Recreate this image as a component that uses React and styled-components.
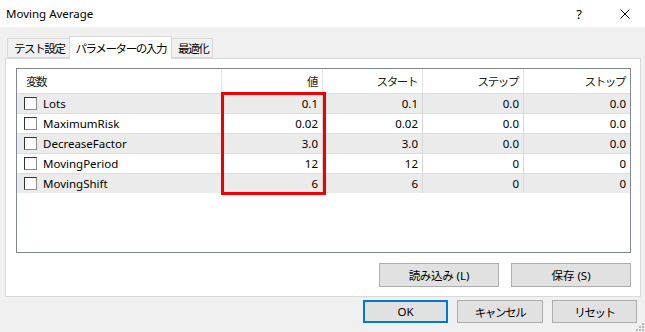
import React from "react";
import styled, { createGlobalStyle } from "styled-components";

const GlobalStyle = createGlobalStyle`
  html, body {
    margin: 0;
    padding: 0;
    background: #f0f0f0;
  }
  body {
    font-family: "Noto Sans", "Noto Sans CJK JP", sans-serif;
    font-size: 11.5px;
    color: #000;
  }
`;

const params = [
  { name: "Lots", value: "0.1", start: "0.1", step: "0.0", stop: "0.0" },
  { name: "MaximumRisk", value: "0.02", start: "0.02", step: "0.0", stop: "0.0" },
  { name: "DecreaseFactor", value: "3.0", start: "3.0", step: "0.0", stop: "0.0" },
  { name: "MovingPeriod", value: "12", start: "12", step: "0", stop: "0" },
  { name: "MovingShift", value: "6", start: "6", step: "0", stop: "0" },
];

const tabs = ["テスト設定", "パラメーターの入力", "最適化"];

function App() {
  return (
    <Window>
      <GlobalStyle />
      <TitleBar>
        <Title>Moving Average</Title>
        <TitleButtons>
          <HelpMark>?</HelpMark>
          <CloseIcon viewBox="0 0 10 10">
            <path d="M0.5 0.5 L9.5 9.5 M9.5 0.5 L0.5 9.5" stroke="#000" strokeWidth="1" />
          </CloseIcon>
        </TitleButtons>
      </TitleBar>

      <TabRow>
        {tabs.map((t, i) => (
          <Tab key={t} active={i === 1}>
            <Jp>{t}</Jp>
          </Tab>
        ))}
      </TabRow>

      <Panel>
        <TableBox>
          <Grid>
            <HeadCell align="left">
              <Jp>変数</Jp>
            </HeadCell>
            <HeadCell>
              <Jp>値</Jp>
            </HeadCell>
            <HeadCell>
              <Jp>スタート</Jp>
            </HeadCell>
            <HeadCell>
              <Jp>ステップ</Jp>
            </HeadCell>
            <HeadCell last>
              <Jp>ストップ</Jp>
            </HeadCell>
            {params.map((p, i) => (
              <Row key={p.name} odd={i % 2 === 0}>
                <NameCell>
                  <Check />
                  <span>{p.name}</span>
                </NameCell>
                <Cell>{p.value}</Cell>
                <Cell>{p.start}</Cell>
                <Cell>{p.step}</Cell>
                <Cell last>{p.stop}</Cell>
              </Row>
            ))}
          </Grid>
          <Highlight />
        </TableBox>
        <PanelButtons>
          <Button w={120}>
            <Jp spacing={-0.3}>読み込み</Jp>&nbsp;(L)
          </Button>
          <Button w={120}>
            <Jp spacing={0}>保存</Jp>&nbsp;(S)
          </Button>
        </PanelButtons>
      </Panel>

      <Footer>
        <Button w={85} h={23} primary>
          OK
        </Button>
        <Button w={86} h={23}>
          <Jp>キャンセル</Jp>
        </Button>
        <Button w={85} h={23}>
          <Jp>リセット</Jp>
        </Button>
      </Footer>
      <Grip viewBox="0 0 10 10">
        {[
          [7, 1],
          [4, 4],
          [7, 4],
          [1, 7],
          [4, 7],
          [7, 7],
        ].map(([x, y]) => (
          <rect key={`${x}-${y}`} x={x} y={y} width="2" height="2" fill="#b8b8b8" />
        ))}
      </Grip>
    </Window>
  );
}

export default App;

const Window = styled.div`
  position: relative;
  width: 645px;
  height: 332px;
  background: #f0f0f0;
  overflow: hidden;
`;

const Jp = styled.span`
  font-size: 11.5px;
  letter-spacing: ${({ spacing }) => (spacing === undefined ? -1.4 : spacing)}px;
  display: inline-block;
`;

const TitleBar = styled.div`
  height: 27px;
  background: #fff;
  display: flex;
  align-items: center;
  justify-content: space-between;
`;

const Title = styled.div`
  padding-left: 6px;
  font-size: 11.5px;
  color: #000;
  margin-top: -1px;
`;

const TitleButtons = styled.div`
  display: flex;
  align-items: center;
  padding-right: 15px;
  gap: 38px;
`;

const HelpMark = styled.span`
  font-size: 13px;
  color: #000;
`;

const CloseIcon = styled.svg`
  width: 10px;
  height: 10px;
`;

const TabRow = styled.div`
  display: flex;
  align-items: flex-end;
  height: 22px;
  margin-top: 9px;
  padding-left: 8px;
  position: relative;
  z-index: 1;
`;

const Tab = styled.div`
  height: ${({ active }) => (active ? "23px" : "20px")};
  padding: ${({ active }) => (active ? "0 5px 0 6px" : "0 4px 0 6px")};
  box-sizing: border-box;
  display: flex;
  align-items: center;
  background: ${({ active }) => (active ? "#fff" : "#f0f0f0")};
  border: 1px solid #d9d9d9;
  border-bottom: ${({ active }) => (active ? "none" : "1px solid #d9d9d9")};
  margin-left: -1px;
  margin-bottom: ${({ active }) => (active ? "-1px" : "0")};
  color: #000;
`;

const Panel = styled.div`
  margin: 0 4px 0 5px;
  height: 239px;
  box-sizing: border-box;
  background: #fff;
  border: 1px solid #d9d9d9;
  padding: 9px 9px 0 10px;
  display: flex;
  flex-direction: column;
`;

const TableBox = styled.div`
  position: relative;
  height: 185px;
  box-sizing: border-box;
  border: 1px solid #828790;
  background: #fff;
`;

const Grid = styled.div`
  display: grid;
  grid-template-columns: 205px 101px 100px 101px 1fr;
  grid-auto-rows: 20px;
  grid-template-rows: 24px;
`;

const HeadCell = styled.div`
  display: flex;
  align-items: center;
  justify-content: ${({ align }) => (align === "left" ? "flex-start" : "flex-end")};
  padding: ${({ align }) => (align === "left" ? "0 0 0 9px" : "0 5px 0 0")};
  border-right: ${({ last }) => (last ? "none" : "1px solid #e5e5e5")};
  color: #222;
`;

const Row = styled.div`
  display: contents;
  & > div {
    background: ${({ odd }) => (odd ? "#ebebeb" : "#fff")};
  }
`;

const NameCell = styled.div`
  display: flex;
  align-items: center;
  gap: 6px;
  padding-left: 7px;
  border-right: 1px solid #d6d6d6;
  border-top: 1px solid #dedede;
`;

const Cell = styled.div`
  display: flex;
  align-items: center;
  justify-content: flex-end;
  padding-right: 4px;
  border-right: ${({ last }) => (last ? "none" : "1px solid #d6d6d6")};
  border-top: 1px solid #dedede;
`;

const Check = styled.span`
  width: 11px;
  height: 11px;
  background: #fff;
  border: 1px solid #333;
  border-right-color: #8a8a8a;
  border-bottom-color: #8a8a8a;
`;

const Highlight = styled.div`
  position: absolute;
  left: 204px;
  top: 23px;
  width: 99px;
  height: 97px;
  border: 3px solid #ee0000;
  pointer-events: none;
`;

const PanelButtons = styled.div`
  display: flex;
  justify-content: flex-end;
  gap: 12px;
  margin-top: 10px;
`;

const Button = styled.div`
  width: ${({ w }) => w}px;
  height: ${({ h }) => h || 24}px;
  box-sizing: border-box;
  display: flex;
  align-items: center;
  justify-content: center;
  background: #e1e1e1;
  border: ${({ primary }) => (primary ? "2px solid #0078d7" : "1px solid #adadad")};
  color: #000;
`;

const Footer = styled.div`
  display: flex;
  justify-content: flex-end;
  gap: 9px;
  padding-right: 8px;
  margin-top: 3px;
`;

const Grip = styled.svg`
  position: absolute;
  right: 0;
  bottom: 0;
  width: 10px;
  height: 10px;
`;
